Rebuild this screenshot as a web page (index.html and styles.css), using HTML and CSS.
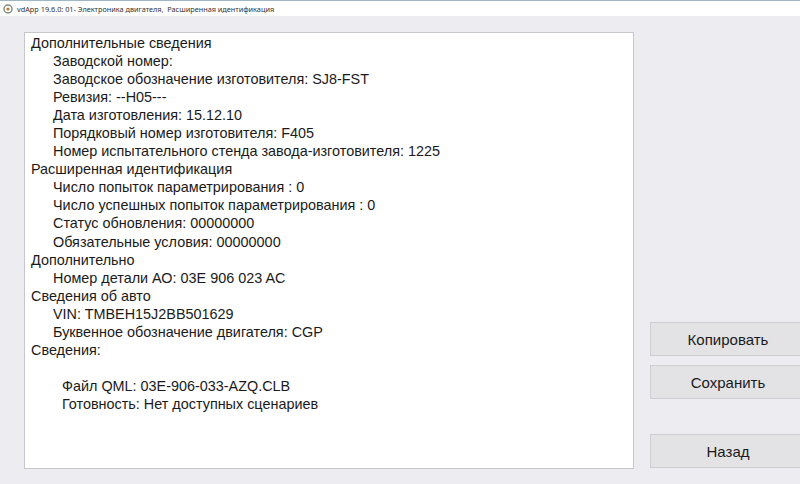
FILE: index.html
```html
<!DOCTYPE html>
<html lang="ru">
<head>
<meta charset="utf-8">
<title>vdApp</title>
<link rel="stylesheet" href="styles.css">
</head>
<body>
<div class="window">
  <div class="titlebar">
    <svg class="app-icon" width="10" height="10" viewBox="0 0 10 10">
      <circle cx="5" cy="5" r="4" fill="none" stroke="#7a8a7a" stroke-width="1.4"/>
      <circle cx="5" cy="5" r="1.6" fill="#b07a3a"/>
    </svg>
    <span class="title">vdApp 19.6.0: 01- Электроника двигателя,&nbsp; Расширенная идентификация</span>
  </div>
  <div class="main">
    <div class="info">
      <div class="h">Дополнительные сведения</div>
      <div class="i">Заводской номер:</div>
      <div class="i">Заводское обозначение изготовителя: SJ8-FST</div>
      <div class="i">Ревизия: --H05---</div>
      <div class="i">Дата изготовления: 15.12.10</div>
      <div class="i">Порядковый номер изготовителя: F405</div>
      <div class="i">Номер испытательного стенда завода-изготовителя: 1225</div>
      <div class="h">Расширенная идентификация</div>
      <div class="i">Число попыток параметрирования : 0</div>
      <div class="i">Число успешных попыток параметрирования : 0</div>
      <div class="i">Статус обновления: 00000000</div>
      <div class="i">Обязательные условия: 00000000</div>
      <div class="h">Дополнительно</div>
      <div class="i">Номер детали АО: 03E 906 023 AC</div>
      <div class="h">Сведения об авто</div>
      <div class="i">VIN: TMBEH15J2BB501629</div>
      <div class="i">Буквенное обозначение двигателя: CGP</div>
      <div class="h">Сведения:</div>
      <div class="blank">&nbsp;</div>
      <div class="i2">Файл QML: 03E-906-033-AZQ.CLB</div>
      <div class="i2">Готовность: Нет доступных сценариев</div>
    </div>
    <div class="side">
      <button class="btn">Копировать</button>
      <button class="btn">Сохранить</button>
      <button class="btn back">Назад</button>
    </div>
  </div>
</div>
</body>
</html>
```
FILE: styles.css
```css
html, body {
  margin: 0;
  padding: 0;
}
body {
  width: 800px;
  height: 484px;
  overflow: hidden;
  background: #ededf1;
  font-family: "Liberation Sans", Arial, sans-serif;
  color: #1a1a1a;
}
.window {
  height: 484px;
  display: flex;
  flex-direction: column;
}
.titlebar {
  height: 15px;
  flex-shrink: 0;
  background: #ffffff;
  border-top: 1px solid #9fb6c4;
  display: flex;
  align-items: center;
  gap: 4px;
  padding-left: 3px;
  font-family: "Noto Sans", "Liberation Sans", sans-serif;
  font-size: 7.3px;
  color: #333;
}
.main {
  flex: 1;
  display: flex;
  padding: 16px 0 0 24px;
}
.info {
  flex-shrink: 0;
  background: #ffffff;
  border: 1px solid #c6c6cc;
  padding-top: 1px;
  padding-left: 6px;
  box-sizing: content-box;
  font-size: 14.4px;
  line-height: 18.05px;
  width: 602px;
  height: 434px;
}
.i {
  padding-left: 22px;
}
.i2 {
  padding-left: 31px;
}
.side {
  flex-shrink: 0;
  margin-left: 16px;
  display: flex;
  flex-direction: column;
  padding-top: 290px;
}
.btn {
  width: 156px;
  height: 34px;
  margin: 0 0 9px 0;
  padding: 0;
  background: #e3e3e6;
  border: 1px solid #cfcfd3;
  font-family: "Liberation Sans", Arial, sans-serif;
  font-size: 15px;
  color: #1a1a1a;
  text-align: center;
}
.back {
  margin-top: 26px;
}
```
